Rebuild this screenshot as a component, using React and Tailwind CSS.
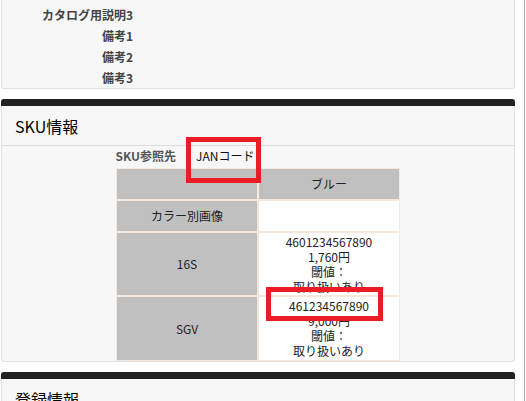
import React from 'react';

const notes = ['カタログ用説明2', 'カタログ用説明3', '備考1', '備考2', '備考3'];

const skuRows = [
  { label: '16S', lines: ['4601234567890', '1,760円', '閾値：', '取り扱いあり'], h: 'h-[62px]' },
  { label: 'SGV', lines: ['461234567890', '9,000円', '閾値：', '取り扱いあり'], h: 'h-[63px]' },
];

function PanelHead({ title }) {
  return (
    <>
      <div className="h-[7px] bg-[#222222] rounded-t-[3px] -mx-[1px]" />
      <div className="h-[40px] flex items-center pl-[13px] text-[16px] text-black border-b border-[#dddddd]">
        {title}
      </div>
    </>
  );
}

export default function App() {
  return (
    <div className="relative w-[526px] h-[401px] overflow-hidden bg-white flex font-['Noto_Sans_CJK_JP',sans-serif]">
      <div className="w-[524px] flex flex-col pl-[1px] pr-[9px]">
        {/* 商品情報 (tail) */}
        <div className="-mt-[17px] bg-[#f7f7f7] border border-t-0 border-[#e2e2e2] rounded-b-[3px]">
          {notes.map((n) => (
            <div key={n} className="h-[21px] flex items-center">
              <span className="w-[131px] text-right text-[12px] font-bold text-[#444444]">{n}</span>
            </div>
          ))}
        </div>

        {/* SKU情報 */}
        <div className="mt-[10px] bg-[#f7f7f7] border border-t-0 border-[#e2e2e2] rounded-b-[3px]">
          <PanelHead title="SKU情報" />
          <div className="flex items-center h-[20px] leading-[20px] text-[12px]">
            <span className="w-[174px] text-right font-bold text-[#555555]">SKU参照先</span>
            <span className="ml-[20px] text-[#111111]">JANコード</span>
          </div>
          <table className="mt-[2px] ml-[114px] w-[284px] table-fixed border-separate border-spacing-0 text-[12px] text-[#222222]">
            <tbody>
              <tr>
                <td className="p-0 border border-[#f6e8dc] bg-[#c0c0c0]">
                  <div className="h-[30px]" />
                </td>
                <td className="p-0 border border-[#f6e8dc] bg-[#c0c0c0]">
                  <div className="h-[30px] flex items-center justify-center">ブルー</div>
                </td>
              </tr>
              <tr>
                <td className="p-0 border border-[#f6e8dc] bg-[#c0c0c0]">
                  <div className="h-[30px] flex items-center justify-center">カラー別画像</div>
                </td>
                <td className="p-0 border border-[#f6e8dc] bg-white">
                  <div className="h-[30px]" />
                </td>
              </tr>
              {skuRows.map((r) => (
                <tr key={r.label}>
                  <td className="p-0 border border-[#f6e8dc] bg-[#c0c0c0]">
                    <div className={`${r.h} flex items-center justify-center`}>{r.label}</div>
                  </td>
                  <td className="p-0 border border-[#f6e8dc] bg-white">
                    <div className={`${r.h} pt-[1px] text-center leading-[15px] overflow-hidden`}>
                      {r.lines.map((l, i) => (
                        <div key={i}>{l}</div>
                      ))}
                    </div>
                  </td>
                </tr>
              ))}
            </tbody>
          </table>
        </div>

        {/* 登録情報 */}
        <div className="mt-[10px] bg-[#f7f7f7] border border-t-0 border-[#e2e2e2]">
          <PanelHead title="登録情報" />
        </div>
      </div>
      <div className="w-[1px] h-full bg-[#a8a8a8]" />

      {/* annotation frames */}
      <div className="absolute left-[186px] top-[137px] w-[75px] h-[46px] border-[5px] border-[#ec1c24]" />
      <div className="absolute left-[266px] top-[287px] w-[117px] h-[34px] border-[5px] border-[#ec1c24]" />
    </div>
  );
}
